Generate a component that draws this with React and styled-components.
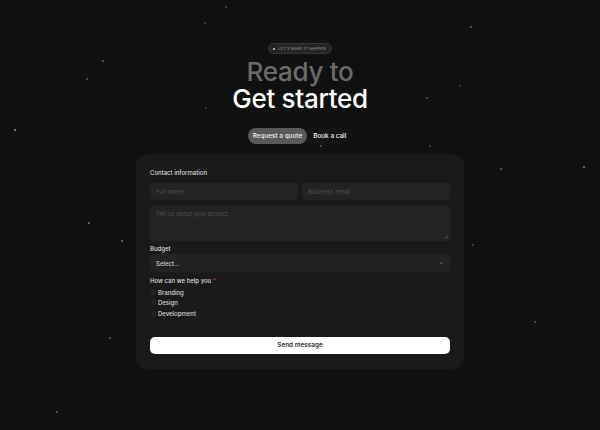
import React from "react";
import styled, { createGlobalStyle } from "styled-components";

const GlobalStyle = createGlobalStyle`
  html, body {
    margin: 0;
    padding: 0;
    background: #111111;
  }
  body {
    font-family: Inter, "Noto Sans", sans-serif;
    color: #e8e8e8;
    -webkit-font-smoothing: antialiased;
  }
`;

const Page = styled.div`
  position: relative;
  width: 600px;
  height: 430px;
  overflow: hidden;
  background: #111111;
`;

const Stars = styled.svg`
  position: absolute;
  left: 0;
  top: 0;
  pointer-events: none;
`;

const Main = styled.main`
  position: relative;
  display: flex;
  flex-direction: column;
  align-items: center;
  padding-top: 43px;
`;

const Badge = styled.div`
  display: flex;
  align-items: center;
  gap: 3px;
  height: 9px;
  padding: 0 5px 0 4px;
  border-radius: 999px;
  background: #252525;
  border: 0.5px solid #333;
  font-size: 4px;
  letter-spacing: 0.1px;
  color: #9a9a9a;
  text-transform: uppercase;
`;

const Dot = styled.span`
  width: 2px;
  height: 2px;
  border-radius: 50%;
  background: #d0d0d0;
`;

const Title = styled.h1`
  margin: 4px 0 0;
  font-size: 26px;
  line-height: 27px;
  font-weight: 500;
  letter-spacing: -0.3px;
  text-align: center;
`;

const TitleLine = styled.span`
  display: block;
  color: ${(p) => (p.$muted ? "#6a6a6a" : "#ffffff")};
`;

const Tabs = styled.div`
  display: flex;
  align-items: center;
  margin-top: 16px;
  border-radius: 999px;
  background: #141414;
`;

const Tab = styled.button`
  height: 16px;
  padding: 0 ${(p) => (p.$active ? 5 : 6)}px;
  border: none;
  border-radius: 999px;
  background: ${(p) => (p.$active ? "#595959" : "transparent")};
  color: ${(p) => (p.$active ? "#f0f0f0" : "#f2f2f2")};
  font-family: inherit;
  font-size: 6.4px;
  font-weight: 500;
  cursor: pointer;
`;

const Card = styled.form`
  margin-top: 10px;
  width: 300px;
  padding: 15px 14px 15px 14px;
  border-radius: 12px;
  background: #1a1a1a;
  box-shadow: 0 0 10px rgba(255, 255, 255, 0.025);
  display: flex;
  flex-direction: column;
`;

const Label = styled.div`
  font-size: 6px;
  line-height: 8px;
  font-weight: 500;
  color: #dcdcdc;
  margin-top: ${(p) => p.$top || 0}px;
  margin-bottom: ${(p) => p.$bottom || 0}px;
`;

const Req = styled.span`
  color: #c0394a;
`;

const Row = styled.div`
  display: grid;
  grid-template-columns: 1fr 1fr;
  gap: 4px;
`;

const Input = styled.input`
  box-sizing: border-box;
  height: 17px;
  width: 100%;
  padding: 0 6px;
  border: none;
  border-radius: 4px;
  background: #232323;
  color: #ddd;
  font-family: inherit;
  font-size: 6px;
  outline: none;
  &::placeholder {
    color: #4e4e4e;
  }
`;

const AreaWrap = styled.div`
  position: relative;
  margin-top: 5px;
`;

const Area = styled.textarea`
  display: block;
  box-sizing: border-box;
  width: 100%;
  height: 36px;
  padding: 5px 6px;
  border: none;
  border-radius: 4px;
  background: #232323;
  color: #ddd;
  font-family: inherit;
  font-size: 6px;
  resize: none;
  outline: none;
  &::placeholder {
    color: #4e4e4e;
  }
`;

const Grip = styled.svg`
  position: absolute;
  right: 2px;
  bottom: 2px;
`;

const Select = styled.div`
  display: flex;
  align-items: center;
  justify-content: space-between;
  height: 18px;
  padding: 0 6px;
  border-radius: 4px;
  background: #222222;
  font-size: 6px;
  font-weight: 500;
  color: #cfcfcf;
`;

const Checks = styled.div`
  display: flex;
  flex-direction: column;
  margin-top: 2px;
`;

const Check = styled.label`
  display: flex;
  align-items: center;
  gap: 2px;
  height: 10.5px;
  font-size: 6px;
  font-weight: 500;
  color: #d6d6d6;
`;

const Box = styled.span`
  width: 5px;
  height: 5px;
  margin-left: 1px;
  border-radius: 1px;
  background: #232323;
`;

const Send = styled.button`
  margin-top: 18px;
  height: 17px;
  border: none;
  border-radius: 5px;
  background: #ffffff;
  color: #333;
  font-family: inherit;
  font-size: 6.4px;
  font-weight: 600;
  cursor: pointer;
`;

const stars = [
  [15, 130, 0.9], [103, 61, 0.6], [87, 79, 0.5], [205, 23, 0.4], [226, 7, 0.4],
  [471, 27, 0.6], [427, 98, 0.5], [430, 146, 0.4], [321, 146, 0.5], [501, 169, 0.6],
  [584, 167, 0.8], [473, 245, 0.4], [535, 322, 0.5], [89, 223, 0.7], [122, 241, 0.7],
  [110, 338, 0.6], [57, 412, 0.6], [206, 108, 0.3], [460, 86, 0.3],
];

export default function App() {
  return (
    <Page>
      <GlobalStyle />
      <Stars width="600" height="430">
        {stars.map(([x, y, o], i) => (
          <circle key={i} cx={x} cy={y} r="0.8" fill="#ffffff" opacity={o} />
        ))}
      </Stars>
      <Main>
        <Badge>
          <Dot />
          Let's make it happen
        </Badge>
        <Title>
          <TitleLine $muted>Ready to</TitleLine>
          <TitleLine>Get started</TitleLine>
        </Title>
        <Tabs>
          <Tab $active type="button">Request a quote</Tab>
          <Tab type="button">Book a call</Tab>
        </Tabs>
        <Card onSubmit={(e) => e.preventDefault()}>
          <Label $bottom={6}>Contact information</Label>
          <Row>
            <Input placeholder="Full name" />
            <Input placeholder="Business email" />
          </Row>
          <AreaWrap>
            <Area placeholder="Tell us about your project" />
            <Grip width="4" height="4" viewBox="0 0 4 4">
              <path d="M0.5 3.8 L3.8 0.5 M2.2 3.8 L3.8 2.2" stroke="#777" strokeWidth="0.6" />
            </Grip>
          </AreaWrap>
          <Label $top={4} $bottom={1}>Budget</Label>
          <Select>
            <span>Select...</span>
            <svg width="5" height="4" viewBox="0 0 5 4">
              <path d="M0.8 1.2 L2.5 2.8 L4.2 1.2" fill="none" stroke="#8a8a8a" strokeWidth="0.7" />
            </svg>
          </Select>
          <Label $top={5}>
            How can we help you <Req>*</Req>
          </Label>
          <Checks>
            <Check><Box />Branding</Check>
            <Check><Box />Design</Check>
            <Check><Box />Development</Check>
          </Checks>
          <Send type="submit">Send message</Send>
        </Card>
      </Main>
    </Page>
  );
}
